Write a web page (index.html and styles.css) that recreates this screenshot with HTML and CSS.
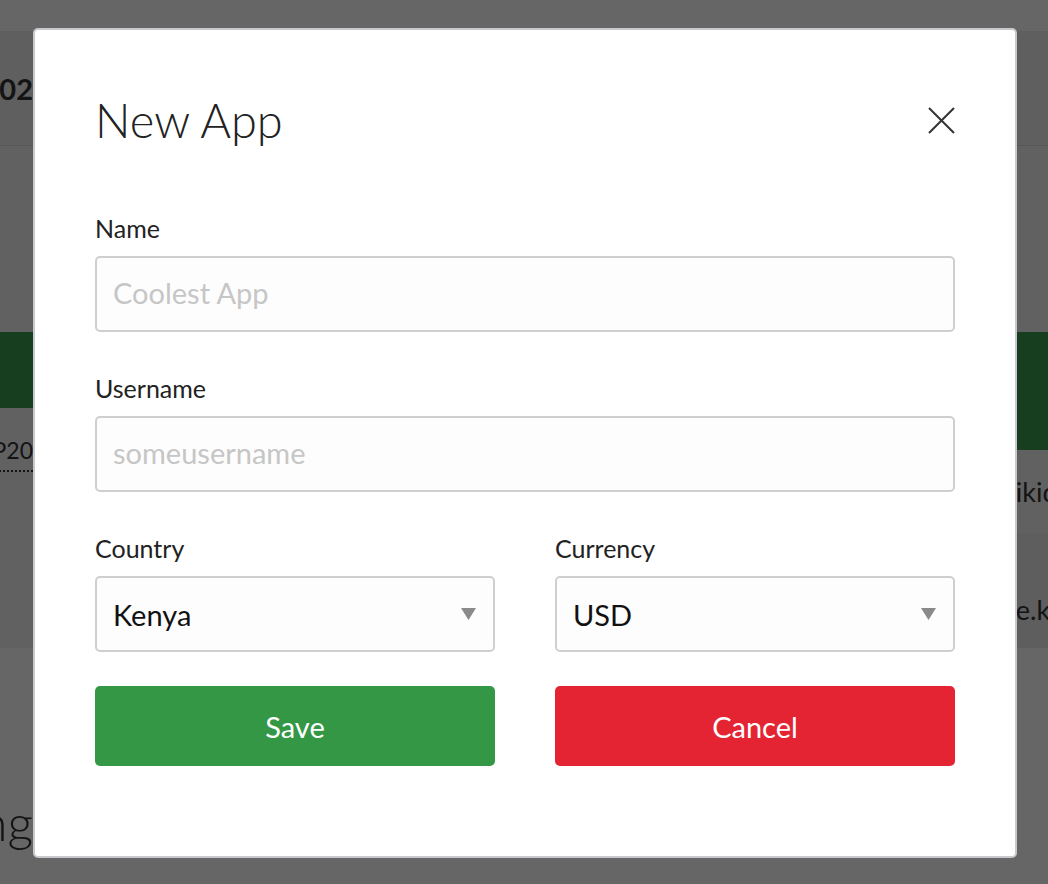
FILE: index.html
```html
<!DOCTYPE html>
<html lang="en">
<head>
<meta charset="utf-8">
<title>New App</title>
<link rel="stylesheet" href="styles.css">
</head>
<body>
<div class="page">
  <div class="topbar"></div>
  <header class="pagehead">
    <div class="edge-cell"><h1 class="pagehead-title">Apps 2021-02</h1></div>
  </header>
  <main class="content">
    <div class="cols">
      <section class="col-main">
        <div class="banner banner-short"></div>
        <div class="row">
          <div class="edge-cell"><a class="ref">APP20</a></div>
        </div>
      </section>
      <section class="col-side">
        <div class="banner banner-tall"></div>
        <div class="side-row side-row-plain"><span>Wikidata</span></div>
        <div class="side-row side-row-band"><span>site.ke</span></div>
      </section>
    </div>
  </main>
  <section class="lower">
    <div class="edge-cell"><h2 class="lower-title">Pending</h2></div>
  </section>
</div>

<div class="overlay"></div>

<div class="modal" role="dialog" aria-labelledby="modal-title">
  <div class="modal-head">
    <h2 class="modal-title" id="modal-title">New App</h2>
    <button class="close" type="button" aria-label="Close">
      <svg width="27" height="27" viewBox="0 0 27 27" aria-hidden="true">
        <path d="M1 1L26 26M26 1L1 26" stroke="#333" stroke-width="2" fill="none"/>
      </svg>
    </button>
  </div>
  <form class="form">
    <label class="field">
      <span class="label">Name</span>
      <input class="input" type="text" placeholder="Coolest App">
    </label>
    <label class="field">
      <span class="label">Username</span>
      <input class="input" type="text" placeholder="someusername">
    </label>
    <div class="grid2">
      <label class="field field-last">
        <span class="label">Country</span>
        <span class="select-wrap">
          <select class="select"><option>Kenya</option></select>
          <svg class="caret" width="15" height="12" viewBox="0 0 15 12" aria-hidden="true"><path d="M0 0H15L7.5 12Z" fill="#8a8a8a"/></svg>
        </span>
      </label>
      <label class="field field-last">
        <span class="label">Currency</span>
        <span class="select-wrap">
          <select class="select"><option>USD</option></select>
          <svg class="caret" width="15" height="12" viewBox="0 0 15 12" aria-hidden="true"><path d="M0 0H15L7.5 12Z" fill="#8a8a8a"/></svg>
        </span>
      </label>
    </div>
    <div class="grid2 actions">
      <button class="btn btn-save" type="button">Save</button>
      <button class="btn btn-cancel" type="button">Cancel</button>
    </div>
  </form>
</div>
</body>
</html>
```
FILE: styles.css
```css
* { box-sizing: border-box; }

html, body {
  margin: 0;
  padding: 0;
  height: 100%;
}

body {
  font-family: Lato, "Open Sans", "Liberation Sans", sans-serif;
  color: #222;
  background: #fff;
  overflow: hidden;
}

/* ---------- page underneath ---------- */
.page {
  width: 1048px;
  height: 884px;
  background: #fff;
}

.topbar {
  height: 31px;
  background: #fff;
}

.pagehead {
  height: 115px;
  background: #ededed;
  border-bottom: 1px solid #d8d8d8;
  display: flex;
  align-items: center;
}

.edge-cell {
  width: 33px;
  flex: none;
  display: flex;
  justify-content: flex-end;
  white-space: nowrap;
}

.pagehead-title {
  margin: 0;
  font-size: 29px;
  font-weight: 700;
  color: #333;
}

.content {
  background: #f3f3f3;
  padding-top: 186px;
}

.cols {
  display: grid;
  grid-template-columns: 988px 60px;
}

.banner {
  background: #3a9e4f;
}
.banner-short { height: 76px; }
.banner-tall { height: 118px; }

.row {
  padding-top: 24px;
  display: flex;
}

.ref {
  font-size: 23px;
  line-height: 36px;
  color: #333;
  text-decoration: none;
  border-bottom: 2px dotted #333;
  padding-bottom: 2px;
}

.col-side {
  white-space: nowrap;
  font-size: 27px;
  line-height: 36px;
  color: #333;
}

.side-row-plain {
  height: 83px;
  padding-top: 24px;
}
.side-row-band {
  height: 115px;
  padding-top: 59px;
  background: #eaeaea;
}

.lower {
  background: #fff;
  padding-top: 144px;
  display: flex;
}

.lower-title {
  margin: 0;
  font-size: 50px;
  line-height: 60px;
  font-weight: 300;
  color: #333;
}

/* ---------- overlay + modal ---------- */
.overlay {
  position: fixed;
  inset: 0;
  background: rgba(0, 0, 0, 0.6);
}

.modal {
  position: absolute;
  top: 28px;
  left: 33px;
  width: 984px;
  height: 830px;
  background: #fff;
  border: 2px solid #c8c8cd;
  border-radius: 5px;
  padding: 62px 60px 0;
}

.modal-head {
  height: 56px;
  display: flex;
  align-items: center;
  justify-content: space-between;
}

.modal-title {
  margin: 0;
  font-size: 47px;
  line-height: 56px;
  font-weight: 300;
  color: #222;
}

.close {
  width: 27px;
  height: 27px;
  padding: 0;
  border: 0;
  background: none;
  display: block;
  cursor: pointer;
}
.close svg { display: block; }

.form {
  margin-top: 65px;
}

.field {
  display: block;
  margin-bottom: 41px;
}
.field-last { margin-bottom: 0; }

.label {
  display: block;
  font-size: 25px;
  line-height: 30px;
  color: #222;
  margin-bottom: 13px;
}

.input,
.select {
  display: block;
  width: 100%;
  height: 76px;
  margin: 0;
  border: 2px solid #cfcfcf;
  border-radius: 5px;
  background: #fdfdfd;
  font-family: inherit;
  font-size: 29px;
  color: #111;
  padding: 0 16px 4px;
  outline: none;
}

.input::placeholder {
  color: #c6c6c6;
  opacity: 1;
}

.select {
  appearance: none;
  -webkit-appearance: none;
  padding: 0 50px 0 16px;
}

.select-wrap {
  position: relative;
  display: block;
}

.caret {
  position: absolute;
  right: 19px;
  top: 32px;
  pointer-events: none;
}

.grid2 {
  display: grid;
  grid-template-columns: 1fr 1fr;
  column-gap: 60px;
}

.actions {
  margin-top: 34px;
}

.btn {
  height: 80px;
  border: 0;
  border-radius: 5px;
  font-family: inherit;
  font-size: 29px;
  color: #fff;
  cursor: pointer;
}
.btn-save { background: #339745; }
.btn-cancel { background: #e52433; }
```
